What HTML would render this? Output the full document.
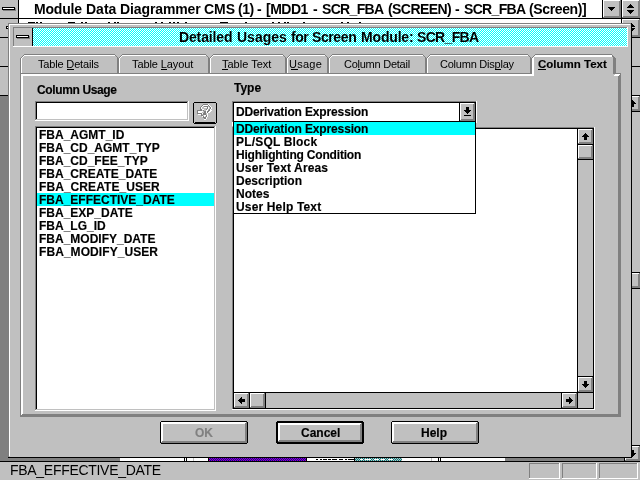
<!DOCTYPE html><html><head><meta charset="utf-8"><style>
html,body{margin:0;padding:0;width:640px;height:480px;overflow:hidden;background:#c0c0c0}
div,svg,span{position:absolute;display:block}
.t{font-family:"Liberation Sans",sans-serif;white-space:pre;line-height:0;will-change:transform}
</style></head><body>
<div style="left:19px;top:0px;width:583px;height:18px;background:#ffffff;"></div>
<div style="left:0px;top:18px;width:640px;height:1px;background:#000000;"></div>
<div style="left:18px;top:0px;width:1px;height:23px;background:#000000;"></div>
<div style="left:602px;top:0px;width:1px;height:18px;background:#000000;"></div>
<div style="left:621px;top:0px;width:1px;height:23px;background:#000000;"></div>
<div style="left:603px;top:0px;width:18px;height:18px;background:#c0c0c0;"></div>
<div style="left:603px;top:17px;width:18px;height:1px;background:#808080;"></div>
<div style="left:620px;top:0px;width:1px;height:18px;background:#808080;"></div>
<div style="left:604px;top:16px;width:16px;height:1px;background:#808080;"></div>
<div style="left:619px;top:1px;width:1px;height:16px;background:#808080;"></div>
<div style="left:603px;top:0px;width:17px;height:1px;background:#ffffff;"></div>
<div style="left:603px;top:0px;width:1px;height:17px;background:#ffffff;"></div>
<div style="left:622px;top:0px;width:18px;height:18px;background:#c0c0c0;"></div>
<div style="left:622px;top:17px;width:18px;height:1px;background:#808080;"></div>
<div style="left:639px;top:0px;width:1px;height:18px;background:#808080;"></div>
<div style="left:623px;top:16px;width:16px;height:1px;background:#808080;"></div>
<div style="left:638px;top:1px;width:1px;height:16px;background:#808080;"></div>
<div style="left:622px;top:0px;width:17px;height:1px;background:#ffffff;"></div>
<div style="left:622px;top:0px;width:1px;height:17px;background:#ffffff;"></div>
<div style="left:2px;top:7px;width:13px;height:3px;background:#000000;"></div>
<div style="left:3px;top:8px;width:11px;height:1px;background:#ffffff;"></div>
<div style="left:15px;top:8px;width:1px;height:3px;background:#808080;"></div>
<div style="left:3px;top:10px;width:13px;height:1px;background:#808080;"></div>
<div style="left:608px;top:7px;width:7px;height:1px;background:#000000;"></div>
<div style="left:609px;top:8px;width:5px;height:1px;background:#000000;"></div>
<div style="left:610px;top:9px;width:3px;height:1px;background:#000000;"></div>
<div style="left:611px;top:10px;width:1px;height:1px;background:#000000;"></div>
<div style="left:630px;top:4px;width:1px;height:1px;background:#000000;"></div>
<div style="left:629px;top:5px;width:3px;height:1px;background:#000000;"></div>
<div style="left:628px;top:6px;width:5px;height:1px;background:#000000;"></div>
<div style="left:627px;top:7px;width:7px;height:1px;background:#000000;"></div>
<div style="left:627px;top:10px;width:7px;height:1px;background:#000000;"></div>
<div style="left:628px;top:11px;width:5px;height:1px;background:#000000;"></div>
<div style="left:629px;top:12px;width:3px;height:1px;background:#000000;"></div>
<div style="left:630px;top:13px;width:1px;height:1px;background:#000000;"></div>
<span class="t" style="left:34px;top:9px;font-size:14px;font-weight:bold;color:#000000;letter-spacing:-0.2px;">Module</span>
<span class="t" style="left:86px;top:9px;font-size:14px;font-weight:bold;color:#000000;letter-spacing:0.0px;">Data</span>
<span class="t" style="left:120px;top:9px;font-size:14px;font-weight:bold;color:#000000;letter-spacing:-0.111px;">Diagrammer</span>
<span class="t" style="left:204px;top:9px;font-size:14px;font-weight:bold;color:#000000;letter-spacing:0.0px;">CMS</span>
<span class="t" style="left:238px;top:9px;font-size:14px;font-weight:bold;color:#000000;letter-spacing:-0.5px;">(1)</span>
<span class="t" style="left:257px;top:9px;font-size:14px;font-weight:bold;color:#000000;letter-spacing:0.8px;">-</span>
<span class="t" style="left:266px;top:9px;font-size:14px;font-weight:bold;color:#000000;letter-spacing:-0.5px;">[MDD1</span>
<span class="t" style="left:313px;top:9px;font-size:14px;font-weight:bold;color:#000000;letter-spacing:0.8px;">-</span>
<span class="t" style="left:322px;top:9px;font-size:14px;font-weight:bold;color:#000000;letter-spacing:-0.667px;">SCR_FBA</span>
<span class="t" style="left:388px;top:9px;font-size:14px;font-weight:bold;color:#000000;letter-spacing:-0.571px;">(SCREEN)</span>
<span class="t" style="left:455px;top:9px;font-size:14px;font-weight:bold;color:#000000;letter-spacing:0.8px;">-</span>
<span class="t" style="left:464px;top:9px;font-size:14px;font-weight:bold;color:#000000;letter-spacing:-0.667px;">SCR_FBA</span>
<span class="t" style="left:529px;top:9px;font-size:14px;font-weight:bold;color:#000000;letter-spacing:-0.375px;">(Screen)]</span>
<div style="left:19px;top:19px;width:602px;height:4px;background:#ffffff;"></div>
<div style="left:18px;top:19px;width:1px;height:4px;background:#000000;"></div>
<div style="left:622px;top:19px;width:18px;height:18px;background:#c0c0c0;"></div>
<div style="left:622px;top:36px;width:18px;height:1px;background:#808080;"></div>
<div style="left:639px;top:19px;width:1px;height:18px;background:#808080;"></div>
<div style="left:623px;top:35px;width:16px;height:1px;background:#808080;"></div>
<div style="left:638px;top:20px;width:1px;height:16px;background:#808080;"></div>
<div style="left:622px;top:19px;width:17px;height:1px;background:#ffffff;"></div>
<div style="left:622px;top:19px;width:1px;height:17px;background:#ffffff;"></div>
<div style="left:28px;top:22px;width:7px;height:1px;background:#000000;"></div>
<div style="left:36px;top:22px;width:2px;height:1px;background:#000000;"></div>
<div style="left:40px;top:22px;width:2px;height:1px;background:#000000;"></div>
<div style="left:68px;top:22px;width:7px;height:1px;background:#000000;"></div>
<div style="left:81px;top:22px;width:2px;height:1px;background:#000000;"></div>
<div style="left:85px;top:22px;width:2px;height:1px;background:#000000;"></div>
<div style="left:108px;top:22px;width:2px;height:1px;background:#000000;"></div>
<div style="left:114px;top:22px;width:2px;height:1px;background:#000000;"></div>
<div style="left:117px;top:22px;width:2px;height:1px;background:#000000;"></div>
<div style="left:155px;top:22px;width:2px;height:1px;background:#000000;"></div>
<div style="left:161px;top:22px;width:2px;height:1px;background:#000000;"></div>
<div style="left:169px;top:22px;width:2px;height:1px;background:#000000;"></div>
<div style="left:173px;top:22px;width:2px;height:1px;background:#000000;"></div>
<div style="left:177px;top:22px;width:2px;height:1px;background:#000000;"></div>
<div style="left:185px;top:22px;width:2px;height:1px;background:#000000;"></div>
<div style="left:220px;top:22px;width:8px;height:1px;background:#000000;"></div>
<div style="left:245px;top:22px;width:2px;height:1px;background:#000000;"></div>
<div style="left:272px;top:22px;width:2px;height:1px;background:#000000;"></div>
<div style="left:278px;top:22px;width:2px;height:1px;background:#000000;"></div>
<div style="left:284px;top:22px;width:2px;height:1px;background:#000000;"></div>
<div style="left:287px;top:22px;width:2px;height:1px;background:#000000;"></div>
<div style="left:303px;top:22px;width:2px;height:1px;background:#000000;"></div>
<div style="left:341px;top:22px;width:2px;height:1px;background:#000000;"></div>
<div style="left:347px;top:22px;width:2px;height:1px;background:#000000;"></div>
<div style="left:359px;top:22px;width:2px;height:1px;background:#000000;"></div>
<div style="left:6px;top:26px;width:2px;height:3px;background:#000000;"></div>
<div style="left:7px;top:27px;width:1px;height:1px;background:#ffffff;"></div>
<div style="left:0px;top:37px;width:8px;height:1px;background:#000000;"></div>
<div style="left:632px;top:37px;width:8px;height:1px;background:#000000;"></div>
<div style="left:0px;top:66px;width:8px;height:1px;background:#000000;"></div>
<div style="left:0px;top:95px;width:8px;height:1px;background:#000000;"></div>
<div style="left:0px;top:96px;width:8px;height:365px;background:#808080;"></div>
<div style="left:632px;top:66px;width:8px;height:1px;background:#000000;"></div>
<div style="left:632px;top:95px;width:8px;height:1px;background:#000000;"></div>
<div style="left:625px;top:96px;width:15px;height:15px;background:#c0c0c0;"></div>
<div style="left:625px;top:110px;width:15px;height:1px;background:#808080;"></div>
<div style="left:639px;top:96px;width:1px;height:15px;background:#808080;"></div>
<div style="left:626px;top:109px;width:13px;height:1px;background:#808080;"></div>
<div style="left:638px;top:97px;width:1px;height:13px;background:#808080;"></div>
<div style="left:625px;top:96px;width:14px;height:1px;background:#ffffff;"></div>
<div style="left:625px;top:96px;width:1px;height:14px;background:#ffffff;"></div>
<div style="left:632px;top:111px;width:8px;height:1px;background:#000000;"></div>
<div style="left:632px;top:272px;width:8px;height:1px;background:#000000;"></div>
<div style="left:625px;top:273px;width:15px;height:15px;background:#c0c0c0;"></div>
<div style="left:625px;top:287px;width:15px;height:1px;background:#808080;"></div>
<div style="left:639px;top:273px;width:1px;height:15px;background:#808080;"></div>
<div style="left:626px;top:286px;width:13px;height:1px;background:#808080;"></div>
<div style="left:638px;top:274px;width:1px;height:13px;background:#808080;"></div>
<div style="left:625px;top:273px;width:14px;height:1px;background:#ffffff;"></div>
<div style="left:625px;top:273px;width:1px;height:14px;background:#ffffff;"></div>
<div style="left:632px;top:288px;width:8px;height:1px;background:#000000;"></div>
<div style="left:632px;top:445px;width:8px;height:1px;background:#000000;"></div>
<div style="left:625px;top:446px;width:15px;height:15px;background:#c0c0c0;"></div>
<div style="left:625px;top:460px;width:15px;height:1px;background:#808080;"></div>
<div style="left:639px;top:446px;width:1px;height:15px;background:#808080;"></div>
<div style="left:626px;top:459px;width:13px;height:1px;background:#808080;"></div>
<div style="left:638px;top:447px;width:1px;height:13px;background:#808080;"></div>
<div style="left:625px;top:446px;width:14px;height:1px;background:#ffffff;"></div>
<div style="left:625px;top:446px;width:1px;height:14px;background:#ffffff;"></div>
<div style="left:624px;top:458px;width:1px;height:3px;background:#000000;"></div>
<div style="left:632px;top:24px;width:1px;height:1px;background:#000000;"></div>
<div style="left:632px;top:25px;width:2px;height:1px;background:#000000;"></div>
<div style="left:632px;top:26px;width:3px;height:1px;background:#000000;"></div>
<div style="left:632px;top:28px;width:3px;height:1px;background:#000000;"></div>
<div style="left:632px;top:29px;width:2px;height:1px;background:#000000;"></div>
<div style="left:632px;top:30px;width:1px;height:1px;background:#000000;"></div>
<div style="left:632px;top:100px;width:1px;height:1px;background:#000000;"></div>
<div style="left:632px;top:101px;width:2px;height:1px;background:#000000;"></div>
<div style="left:632px;top:102px;width:3px;height:1px;background:#000000;"></div>
<div style="left:632px;top:103px;width:4px;height:1px;background:#000000;"></div>
<div style="left:632px;top:104px;width:2px;height:3px;background:#000000;"></div>
<div style="left:632px;top:450px;width:2px;height:3px;background:#000000;"></div>
<div style="left:632px;top:453px;width:4px;height:1px;background:#000000;"></div>
<div style="left:632px;top:454px;width:3px;height:1px;background:#000000;"></div>
<div style="left:632px;top:455px;width:2px;height:1px;background:#000000;"></div>
<div style="left:632px;top:456px;width:1px;height:1px;background:#000000;"></div>
<div style="left:8px;top:458px;width:112px;height:3px;background:#808080;"></div>
<div style="left:120px;top:458px;width:88px;height:3px;background:#ffffff;"></div>
<div style="left:184px;top:458px;width:1px;height:3px;background:#000000;"></div>
<div style="left:186px;top:458px;width:1px;height:3px;background:#000000;"></div>
<div style="left:193px;top:458px;width:1px;height:3px;background:#c0c0c0;"></div>
<div style="left:208px;top:458px;width:1px;height:3px;background:#000000;"></div>
<svg style="left:209px;top:458px" width="97" height="3" shape-rendering="crispEdges"><defs><pattern id="p209_458" width="2" height="2" patternUnits="userSpaceOnUse"><rect width="2" height="2" fill="#0000b0"/><rect width="1" height="1" fill="#b000a0"/><rect x="1" y="1" width="1" height="1" fill="#b000a0"/></pattern></defs><rect width="97" height="3" fill="url(#p209_458)"/></svg>
<div style="left:306px;top:458px;width:1px;height:3px;background:#000000;"></div>
<div style="left:307px;top:458px;width:48px;height:3px;background:#ffffff;"></div>
<div style="left:316px;top:459px;width:2px;height:1px;background:#000000;"></div>
<div style="left:320px;top:459px;width:2px;height:1px;background:#000000;"></div>
<div style="left:323px;top:459px;width:4px;height:1px;background:#000000;"></div>
<div style="left:328px;top:459px;width:3px;height:1px;background:#000000;"></div>
<div style="left:332px;top:459px;width:5px;height:1px;background:#000000;"></div>
<div style="left:339px;top:459px;width:4px;height:1px;background:#000000;"></div>
<div style="left:345px;top:459px;width:2px;height:1px;background:#000000;"></div>
<div style="left:348px;top:459px;width:7px;height:1px;background:#000000;"></div>
<svg style="left:355px;top:458px" width="47" height="3" shape-rendering="crispEdges"><defs><pattern id="p355_458" width="2" height="2" patternUnits="userSpaceOnUse"><rect width="2" height="2" fill="#008080"/><rect width="1" height="1" fill="#c0c0c0"/><rect x="1" y="1" width="1" height="1" fill="#c0c0c0"/></pattern></defs><rect width="47" height="3" fill="url(#p355_458)"/></svg>
<div style="left:354px;top:458px;width:1px;height:3px;background:#000000;"></div>
<div style="left:402px;top:458px;width:1px;height:3px;background:#000000;"></div>
<div style="left:360px;top:459px;width:3px;height:1px;background:#ffffff;"></div>
<div style="left:365px;top:459px;width:6px;height:1px;background:#ffffff;"></div>
<div style="left:374px;top:459px;width:5px;height:1px;background:#ffffff;"></div>
<div style="left:381px;top:459px;width:4px;height:1px;background:#ffffff;"></div>
<div style="left:388px;top:459px;width:5px;height:1px;background:#ffffff;"></div>
<div style="left:402px;top:458px;width:103px;height:3px;background:#ffffff;"></div>
<div style="left:431px;top:458px;width:1px;height:3px;background:#c0c0c0;"></div>
<div style="left:438px;top:458px;width:1px;height:3px;background:#000000;"></div>
<div style="left:440px;top:458px;width:1px;height:3px;background:#000000;"></div>
<div style="left:505px;top:458px;width:119px;height:3px;background:#808080;"></div>
<div style="left:0px;top:461px;width:640px;height:1px;background:#000000;"></div>
<span class="t" style="left:10px;top:470px;font-size:14px;font-weight:normal;color:#000000;letter-spacing:-0.294px;">FBA_EFFECTIVE_DATE</span>
<div style="left:529px;top:463px;width:31px;height:1px;background:#808080;"></div>
<div style="left:529px;top:463px;width:1px;height:16px;background:#808080;"></div>
<div style="left:529px;top:478px;width:31px;height:1px;background:#ffffff;"></div>
<div style="left:559px;top:463px;width:1px;height:16px;background:#ffffff;"></div>
<div style="left:562px;top:463px;width:35px;height:1px;background:#808080;"></div>
<div style="left:562px;top:463px;width:1px;height:16px;background:#808080;"></div>
<div style="left:562px;top:478px;width:35px;height:1px;background:#ffffff;"></div>
<div style="left:596px;top:463px;width:1px;height:16px;background:#ffffff;"></div>
<div style="left:599px;top:463px;width:39px;height:1px;background:#808080;"></div>
<div style="left:599px;top:463px;width:1px;height:16px;background:#808080;"></div>
<div style="left:599px;top:478px;width:39px;height:1px;background:#ffffff;"></div>
<div style="left:637px;top:463px;width:1px;height:16px;background:#ffffff;"></div>
<div style="left:8px;top:23px;width:624px;height:435px;background:#c0c0c0;"></div>
<div style="left:8px;top:23px;width:623px;height:1px;background:#808080;"></div>
<div style="left:8px;top:23px;width:1px;height:434px;background:#808080;"></div>
<div style="left:9px;top:24px;width:621px;height:1px;background:#ffffff;"></div>
<div style="left:9px;top:24px;width:1px;height:432px;background:#ffffff;"></div>
<div style="left:8px;top:457px;width:624px;height:1px;background:#000000;"></div>
<div style="left:631px;top:23px;width:1px;height:435px;background:#000000;"></div>
<div style="left:13px;top:27px;width:614px;height:1px;background:#808080;"></div>
<div style="left:13px;top:27px;width:1px;height:20px;background:#808080;"></div>
<div style="left:13px;top:46px;width:615px;height:1px;background:#ffffff;"></div>
<div style="left:627px;top:27px;width:1px;height:20px;background:#ffffff;"></div>
<div style="left:14px;top:28px;width:18px;height:18px;background:#c0c0c0;"></div>
<div style="left:32px;top:28px;width:1px;height:18px;background:#000000;"></div>
<div style="left:16px;top:35px;width:13px;height:3px;background:#000000;"></div>
<div style="left:17px;top:36px;width:11px;height:1px;background:#ffffff;"></div>
<div style="left:29px;top:36px;width:1px;height:3px;background:#808080;"></div>
<div style="left:17px;top:38px;width:13px;height:1px;background:#808080;"></div>
<svg style="left:33px;top:28px" width="594" height="18" shape-rendering="crispEdges"><defs><pattern id="p33_28" width="2" height="2" patternUnits="userSpaceOnUse"><rect width="2" height="2" fill="#ffffff"/><rect width="1" height="1" fill="#00ffff"/><rect x="1" y="1" width="1" height="1" fill="#00ffff"/></pattern></defs><rect width="594" height="18" fill="url(#p33_28)"/></svg>
<span class="t" style="left:179px;top:37px;font-size:14px;font-weight:bold;color:#000000;letter-spacing:-0.143px;">Detailed</span>
<span class="t" style="left:237px;top:37px;font-size:14px;font-weight:bold;color:#000000;letter-spacing:0.0px;">Usages</span>
<span class="t" style="left:291px;top:37px;font-size:14px;font-weight:bold;color:#000000;letter-spacing:-0.5px;">for</span>
<span class="t" style="left:312px;top:37px;font-size:14px;font-weight:bold;color:#000000;letter-spacing:-0.4px;">Screen</span>
<span class="t" style="left:361px;top:37px;font-size:14px;font-weight:bold;color:#000000;letter-spacing:-0.167px;">Module:</span>
<span class="t" style="left:417px;top:37px;font-size:14px;font-weight:bold;color:#000000;letter-spacing:-0.667px;">SCR_FBA</span>
<div style="left:20px;top:73px;width:601px;height:344px;background:#c0c0c0;"></div>
<div style="left:20px;top:73px;width:601px;height:1px;background:#808080;"></div>
<div style="left:20px;top:73px;width:1px;height:344px;background:#808080;"></div>
<div style="left:21px;top:74px;width:599px;height:1px;background:#ffffff;"></div>
<div style="left:21px;top:75px;width:599px;height:1px;background:#ffffff;"></div>
<div style="left:21px;top:74px;width:1px;height:342px;background:#ffffff;"></div>
<div style="left:22px;top:74px;width:1px;height:341px;background:#ffffff;"></div>
<div style="left:620px;top:73px;width:1px;height:344px;background:#808080;"></div>
<div style="left:619px;top:74px;width:1px;height:343px;background:#808080;"></div>
<div style="left:618px;top:75px;width:1px;height:342px;background:#808080;"></div>
<div style="left:20px;top:416px;width:601px;height:1px;background:#808080;"></div>
<div style="left:21px;top:415px;width:600px;height:1px;background:#808080;"></div>
<div style="left:22px;top:414px;width:599px;height:1px;background:#808080;"></div>
<div style="left:21px;top:54px;width:97px;height:19px;background:#c0c0c0;"></div>
<div style="left:24px;top:54px;width:91px;height:1px;background:#808080;"></div>
<div style="left:24px;top:55px;width:91px;height:1px;background:#ffffff;"></div>
<div style="left:20px;top:58px;width:1px;height:15px;background:#808080;"></div>
<div style="left:21px;top:58px;width:1px;height:15px;background:#ffffff;"></div>
<div style="left:21px;top:57px;width:1px;height:1px;background:#808080;"></div>
<div style="left:22px;top:56px;width:1px;height:1px;background:#808080;"></div>
<div style="left:23px;top:55px;width:1px;height:1px;background:#808080;"></div>
<div style="left:22px;top:57px;width:1px;height:1px;background:#ffffff;"></div>
<div style="left:23px;top:56px;width:1px;height:1px;background:#ffffff;"></div>
<div style="left:115px;top:55px;width:1px;height:1px;background:#808080;"></div>
<div style="left:116px;top:56px;width:1px;height:1px;background:#808080;"></div>
<div style="left:117px;top:57px;width:1px;height:16px;background:#808080;"></div>
<div style="left:118px;top:58px;width:1px;height:15px;background:#808080;"></div>
<div style="left:119px;top:54px;width:90px;height:19px;background:#c0c0c0;"></div>
<div style="left:122px;top:54px;width:84px;height:1px;background:#808080;"></div>
<div style="left:122px;top:55px;width:84px;height:1px;background:#ffffff;"></div>
<div style="left:118px;top:58px;width:1px;height:15px;background:#808080;"></div>
<div style="left:119px;top:58px;width:1px;height:15px;background:#ffffff;"></div>
<div style="left:119px;top:57px;width:1px;height:1px;background:#808080;"></div>
<div style="left:120px;top:56px;width:1px;height:1px;background:#808080;"></div>
<div style="left:121px;top:55px;width:1px;height:1px;background:#808080;"></div>
<div style="left:120px;top:57px;width:1px;height:1px;background:#ffffff;"></div>
<div style="left:121px;top:56px;width:1px;height:1px;background:#ffffff;"></div>
<div style="left:206px;top:55px;width:1px;height:1px;background:#808080;"></div>
<div style="left:207px;top:56px;width:1px;height:1px;background:#808080;"></div>
<div style="left:208px;top:57px;width:1px;height:16px;background:#808080;"></div>
<div style="left:209px;top:58px;width:1px;height:15px;background:#808080;"></div>
<div style="left:210px;top:54px;width:76px;height:19px;background:#c0c0c0;"></div>
<div style="left:213px;top:54px;width:70px;height:1px;background:#808080;"></div>
<div style="left:213px;top:55px;width:70px;height:1px;background:#ffffff;"></div>
<div style="left:209px;top:58px;width:1px;height:15px;background:#808080;"></div>
<div style="left:210px;top:58px;width:1px;height:15px;background:#ffffff;"></div>
<div style="left:210px;top:57px;width:1px;height:1px;background:#808080;"></div>
<div style="left:211px;top:56px;width:1px;height:1px;background:#808080;"></div>
<div style="left:212px;top:55px;width:1px;height:1px;background:#808080;"></div>
<div style="left:211px;top:57px;width:1px;height:1px;background:#ffffff;"></div>
<div style="left:212px;top:56px;width:1px;height:1px;background:#ffffff;"></div>
<div style="left:283px;top:55px;width:1px;height:1px;background:#808080;"></div>
<div style="left:284px;top:56px;width:1px;height:1px;background:#808080;"></div>
<div style="left:285px;top:57px;width:1px;height:16px;background:#808080;"></div>
<div style="left:286px;top:58px;width:1px;height:15px;background:#808080;"></div>
<div style="left:287px;top:54px;width:41px;height:19px;background:#c0c0c0;"></div>
<div style="left:290px;top:54px;width:35px;height:1px;background:#808080;"></div>
<div style="left:290px;top:55px;width:35px;height:1px;background:#ffffff;"></div>
<div style="left:286px;top:58px;width:1px;height:15px;background:#808080;"></div>
<div style="left:287px;top:58px;width:1px;height:15px;background:#ffffff;"></div>
<div style="left:287px;top:57px;width:1px;height:1px;background:#808080;"></div>
<div style="left:288px;top:56px;width:1px;height:1px;background:#808080;"></div>
<div style="left:289px;top:55px;width:1px;height:1px;background:#808080;"></div>
<div style="left:288px;top:57px;width:1px;height:1px;background:#ffffff;"></div>
<div style="left:289px;top:56px;width:1px;height:1px;background:#ffffff;"></div>
<div style="left:325px;top:55px;width:1px;height:1px;background:#808080;"></div>
<div style="left:326px;top:56px;width:1px;height:1px;background:#808080;"></div>
<div style="left:327px;top:57px;width:1px;height:16px;background:#808080;"></div>
<div style="left:328px;top:58px;width:1px;height:15px;background:#808080;"></div>
<div style="left:329px;top:54px;width:97px;height:19px;background:#c0c0c0;"></div>
<div style="left:332px;top:54px;width:91px;height:1px;background:#808080;"></div>
<div style="left:332px;top:55px;width:91px;height:1px;background:#ffffff;"></div>
<div style="left:328px;top:58px;width:1px;height:15px;background:#808080;"></div>
<div style="left:329px;top:58px;width:1px;height:15px;background:#ffffff;"></div>
<div style="left:329px;top:57px;width:1px;height:1px;background:#808080;"></div>
<div style="left:330px;top:56px;width:1px;height:1px;background:#808080;"></div>
<div style="left:331px;top:55px;width:1px;height:1px;background:#808080;"></div>
<div style="left:330px;top:57px;width:1px;height:1px;background:#ffffff;"></div>
<div style="left:331px;top:56px;width:1px;height:1px;background:#ffffff;"></div>
<div style="left:423px;top:55px;width:1px;height:1px;background:#808080;"></div>
<div style="left:424px;top:56px;width:1px;height:1px;background:#808080;"></div>
<div style="left:425px;top:57px;width:1px;height:16px;background:#808080;"></div>
<div style="left:426px;top:58px;width:1px;height:15px;background:#808080;"></div>
<div style="left:427px;top:54px;width:104px;height:19px;background:#c0c0c0;"></div>
<div style="left:430px;top:54px;width:98px;height:1px;background:#808080;"></div>
<div style="left:430px;top:55px;width:98px;height:1px;background:#ffffff;"></div>
<div style="left:426px;top:58px;width:1px;height:15px;background:#808080;"></div>
<div style="left:427px;top:58px;width:1px;height:15px;background:#ffffff;"></div>
<div style="left:427px;top:57px;width:1px;height:1px;background:#808080;"></div>
<div style="left:428px;top:56px;width:1px;height:1px;background:#808080;"></div>
<div style="left:429px;top:55px;width:1px;height:1px;background:#808080;"></div>
<div style="left:428px;top:57px;width:1px;height:1px;background:#ffffff;"></div>
<div style="left:429px;top:56px;width:1px;height:1px;background:#ffffff;"></div>
<div style="left:528px;top:55px;width:1px;height:1px;background:#808080;"></div>
<div style="left:529px;top:56px;width:1px;height:1px;background:#808080;"></div>
<div style="left:530px;top:57px;width:1px;height:16px;background:#808080;"></div>
<div style="left:531px;top:58px;width:1px;height:15px;background:#808080;"></div>
<div style="left:532px;top:54px;width:84px;height:22px;background:#c0c0c0;"></div>
<div style="left:535px;top:54px;width:77px;height:1px;background:#808080;"></div>
<div style="left:535px;top:55px;width:77px;height:1px;background:#ffffff;"></div>
<div style="left:534px;top:56px;width:78px;height:1px;background:#ffffff;"></div>
<div style="left:531px;top:58px;width:1px;height:16px;background:#808080;"></div>
<div style="left:532px;top:58px;width:1px;height:18px;background:#ffffff;"></div>
<div style="left:533px;top:57px;width:1px;height:19px;background:#ffffff;"></div>
<div style="left:532px;top:57px;width:1px;height:1px;background:#808080;"></div>
<div style="left:533px;top:56px;width:1px;height:1px;background:#808080;"></div>
<div style="left:534px;top:55px;width:1px;height:1px;background:#808080;"></div>
<div style="left:612px;top:55px;width:1px;height:1px;background:#808080;"></div>
<div style="left:613px;top:56px;width:1px;height:1px;background:#808080;"></div>
<div style="left:612px;top:56px;width:1px;height:1px;background:#808080;"></div>
<div style="left:613px;top:57px;width:1px;height:17px;background:#808080;"></div>
<div style="left:614px;top:57px;width:1px;height:17px;background:#808080;"></div>
<div style="left:615px;top:58px;width:1px;height:16px;background:#808080;"></div>
<div style="left:616px;top:73px;width:5px;height:1px;background:#808080;"></div>
<div style="left:615px;top:74px;width:5px;height:1px;background:#ffffff;"></div>
<div style="left:614px;top:75px;width:5px;height:1px;background:#ffffff;"></div>
<span class="t" style="left:38px;top:64px;font-size:11px;font-weight:normal;color:#000000;letter-spacing:-0.167px;">Table Details</span>
<span class="t" style="left:132px;top:64px;font-size:11px;font-weight:normal;color:#000000;letter-spacing:-0.091px;">Table Layout</span>
<span class="t" style="left:222px;top:64px;font-size:11px;font-weight:normal;color:#000000;letter-spacing:0.0px;">Table Text</span>
<span class="t" style="left:289px;top:64px;font-size:11px;font-weight:normal;color:#000000;letter-spacing:0.25px;">Usage</span>
<span class="t" style="left:344px;top:64px;font-size:11px;font-weight:normal;color:#000000;letter-spacing:-0.25px;">Column Detail</span>
<span class="t" style="left:440px;top:64px;font-size:11px;font-weight:normal;color:#000000;letter-spacing:-0.231px;">Column Display</span>
<span class="t" style="left:538px;top:64px;font-size:11.5px;font-weight:bold;color:#000000;letter-spacing:0.0px;-webkit-text-stroke:0.15px #000000;">Column Text</span>
<div style="left:67px;top:69px;width:7px;height:1px;background:#000000;"></div>
<div style="left:161px;top:69px;width:6px;height:1px;background:#000000;"></div>
<div style="left:222px;top:69px;width:6px;height:1px;background:#000000;"></div>
<div style="left:291px;top:69px;width:7px;height:1px;background:#000000;"></div>
<div style="left:358px;top:69px;width:2px;height:1px;background:#000000;"></div>
<div style="left:495px;top:69px;width:6px;height:1px;background:#000000;"></div>
<div style="left:538px;top:69px;width:8px;height:1px;background:#000000;"></div>
<span class="t" style="left:37px;top:90px;font-size:12px;font-weight:bold;color:#000000;letter-spacing:-0.364px;-webkit-text-stroke:0.15px #000000;">Column Usage</span>
<div style="left:35px;top:101px;width:154px;height:20px;background:#ffffff;"></div>
<div style="left:35px;top:101px;width:154px;height:1px;background:#808080;"></div>
<div style="left:35px;top:101px;width:1px;height:20px;background:#808080;"></div>
<div style="left:36px;top:102px;width:152px;height:1px;background:#000000;"></div>
<div style="left:36px;top:102px;width:1px;height:18px;background:#000000;"></div>
<div style="left:35px;top:120px;width:154px;height:1px;background:#ffffff;"></div>
<div style="left:188px;top:101px;width:1px;height:20px;background:#ffffff;"></div>
<div style="left:36px;top:119px;width:152px;height:1px;background:#c0c0c0;"></div>
<div style="left:187px;top:102px;width:1px;height:18px;background:#c0c0c0;"></div>
<div style="left:194px;top:102px;width:22px;height:21px;background:#c0c0c0;"></div>
<div style="left:194px;top:102px;width:22px;height:1px;background:#000000;"></div>
<div style="left:194px;top:123px;width:22px;height:1px;background:#000000;"></div>
<div style="left:193px;top:103px;width:1px;height:20px;background:#000000;"></div>
<div style="left:216px;top:103px;width:1px;height:20px;background:#000000;"></div>
<div style="left:195px;top:122px;width:20px;height:1px;background:#000000;"></div>
<div style="left:208px;top:104px;width:1px;height:1px;background:#ffffff;"></div>
<div style="left:203px;top:105px;width:5px;height:1px;background:#ffffff;"></div>
<div style="left:209px;top:105px;width:1px;height:1px;background:#ffffff;"></div>
<div style="left:202px;top:106px;width:1px;height:1px;background:#ffffff;"></div>
<div style="left:210px;top:106px;width:1px;height:1px;background:#ffffff;"></div>
<div style="left:201px;top:107px;width:1px;height:1px;background:#ffffff;"></div>
<div style="left:204px;top:107px;width:3px;height:1px;background:#ffffff;"></div>
<div style="left:208px;top:107px;width:1px;height:1px;background:#ffffff;"></div>
<div style="left:211px;top:107px;width:1px;height:1px;background:#ffffff;"></div>
<div style="left:201px;top:108px;width:1px;height:1px;background:#ffffff;"></div>
<div style="left:208px;top:108px;width:1px;height:1px;background:#ffffff;"></div>
<div style="left:211px;top:108px;width:1px;height:1px;background:#ffffff;"></div>
<div style="left:202px;top:109px;width:2px;height:1px;background:#ffffff;"></div>
<div style="left:207px;top:109px;width:1px;height:1px;background:#ffffff;"></div>
<div style="left:210px;top:109px;width:1px;height:1px;background:#ffffff;"></div>
<div style="left:206px;top:110px;width:2px;height:1px;background:#ffffff;"></div>
<div style="left:210px;top:110px;width:2px;height:1px;background:#ffffff;"></div>
<div style="left:198px;top:111px;width:5px;height:1px;background:#ffffff;"></div>
<div style="left:206px;top:111px;width:1px;height:1px;background:#ffffff;"></div>
<div style="left:209px;top:111px;width:2px;height:1px;background:#ffffff;"></div>
<div style="left:198px;top:112px;width:4px;height:1px;background:#ffffff;"></div>
<div style="left:206px;top:112px;width:1px;height:1px;background:#ffffff;"></div>
<div style="left:208px;top:112px;width:2px;height:1px;background:#ffffff;"></div>
<div style="left:202px;top:113px;width:1px;height:1px;background:#ffffff;"></div>
<div style="left:207px;top:113px;width:1px;height:1px;background:#ffffff;"></div>
<div style="left:198px;top:114px;width:3px;height:1px;background:#ffffff;"></div>
<div style="left:207px;top:114px;width:1px;height:1px;background:#ffffff;"></div>
<div style="left:204px;top:115px;width:2px;height:1px;background:#ffffff;"></div>
<div style="left:207px;top:115px;width:1px;height:1px;background:#ffffff;"></div>
<div style="left:202px;top:116px;width:1px;height:1px;background:#ffffff;"></div>
<div style="left:204px;top:116px;width:1px;height:1px;background:#ffffff;"></div>
<div style="left:207px;top:116px;width:1px;height:1px;background:#ffffff;"></div>
<div style="left:206px;top:117px;width:1px;height:1px;background:#ffffff;"></div>
<div style="left:206px;top:118px;width:1px;height:1px;background:#ffffff;"></div>
<div style="left:204px;top:119px;width:2px;height:1px;background:#ffffff;"></div>
<div style="left:203px;top:104px;width:5px;height:1px;background:#808080;"></div>
<div style="left:202px;top:105px;width:1px;height:1px;background:#808080;"></div>
<div style="left:208px;top:105px;width:1px;height:1px;background:#808080;"></div>
<div style="left:201px;top:106px;width:1px;height:1px;background:#808080;"></div>
<div style="left:204px;top:106px;width:4px;height:1px;background:#808080;"></div>
<div style="left:209px;top:106px;width:1px;height:1px;background:#808080;"></div>
<div style="left:200px;top:107px;width:1px;height:1px;background:#808080;"></div>
<div style="left:207px;top:107px;width:1px;height:1px;background:#808080;"></div>
<div style="left:210px;top:107px;width:1px;height:1px;background:#808080;"></div>
<div style="left:200px;top:108px;width:1px;height:1px;background:#808080;"></div>
<div style="left:207px;top:108px;width:1px;height:1px;background:#808080;"></div>
<div style="left:210px;top:108px;width:1px;height:1px;background:#808080;"></div>
<div style="left:200px;top:109px;width:2px;height:1px;background:#808080;"></div>
<div style="left:206px;top:109px;width:1px;height:1px;background:#808080;"></div>
<div style="left:209px;top:109px;width:1px;height:1px;background:#808080;"></div>
<div style="left:197px;top:110px;width:5px;height:1px;background:#808080;"></div>
<div style="left:203px;top:110px;width:1px;height:1px;background:#808080;"></div>
<div style="left:208px;top:110px;width:2px;height:1px;background:#808080;"></div>
<div style="left:197px;top:111px;width:1px;height:1px;background:#808080;"></div>
<div style="left:204px;top:111px;width:2px;height:1px;background:#808080;"></div>
<div style="left:207px;top:111px;width:2px;height:1px;background:#808080;"></div>
<div style="left:197px;top:112px;width:1px;height:1px;background:#808080;"></div>
<div style="left:204px;top:112px;width:2px;height:1px;background:#808080;"></div>
<div style="left:207px;top:112px;width:1px;height:1px;background:#808080;"></div>
<div style="left:197px;top:113px;width:5px;height:1px;background:#808080;"></div>
<div style="left:203px;top:113px;width:3px;height:1px;background:#808080;"></div>
<div style="left:201px;top:114px;width:1px;height:1px;background:#808080;"></div>
<div style="left:203px;top:114px;width:3px;height:1px;background:#808080;"></div>
<div style="left:201px;top:115px;width:2px;height:1px;background:#808080;"></div>
<div style="left:206px;top:115px;width:1px;height:1px;background:#808080;"></div>
<div style="left:203px;top:116px;width:1px;height:1px;background:#808080;"></div>
<div style="left:206px;top:116px;width:1px;height:1px;background:#808080;"></div>
<div style="left:203px;top:117px;width:3px;height:1px;background:#808080;"></div>
<div style="left:204px;top:118px;width:2px;height:1px;background:#808080;"></div>
<div style="left:35px;top:126px;width:181px;height:285px;background:#ffffff;"></div>
<div style="left:35px;top:126px;width:181px;height:1px;background:#808080;"></div>
<div style="left:35px;top:126px;width:1px;height:285px;background:#808080;"></div>
<div style="left:36px;top:127px;width:179px;height:1px;background:#000000;"></div>
<div style="left:36px;top:127px;width:1px;height:283px;background:#000000;"></div>
<div style="left:35px;top:410px;width:181px;height:1px;background:#ffffff;"></div>
<div style="left:215px;top:126px;width:1px;height:285px;background:#ffffff;"></div>
<div style="left:36px;top:409px;width:179px;height:1px;background:#c0c0c0;"></div>
<div style="left:214px;top:127px;width:1px;height:283px;background:#c0c0c0;"></div>
<div style="left:37px;top:193px;width:177px;height:13px;background:#00ffff;"></div>
<span class="t" style="left:39px;top:135px;font-size:12px;font-weight:bold;color:#000000;letter-spacing:0.0px;-webkit-text-stroke:0.15px #000000;">FBA_AGMT_ID</span>
<span class="t" style="left:39px;top:148px;font-size:12px;font-weight:bold;color:#000000;letter-spacing:0.0px;-webkit-text-stroke:0.15px #000000;">FBA_CD_AGMT_TYP</span>
<span class="t" style="left:39px;top:161px;font-size:12px;font-weight:bold;color:#000000;letter-spacing:0.0px;-webkit-text-stroke:0.15px #000000;">FBA_CD_FEE_TYP</span>
<span class="t" style="left:39px;top:174px;font-size:12px;font-weight:bold;color:#000000;letter-spacing:0.0px;-webkit-text-stroke:0.15px #000000;">FBA_CREATE_DATE</span>
<span class="t" style="left:39px;top:187px;font-size:12px;font-weight:bold;color:#000000;letter-spacing:0.071px;-webkit-text-stroke:0.15px #000000;">FBA_CREATE_USER</span>
<span class="t" style="left:39px;top:200px;font-size:12px;font-weight:bold;color:#000000;letter-spacing:0.0px;-webkit-text-stroke:0.15px #000000;">FBA_EFFECTIVE_DATE</span>
<span class="t" style="left:39px;top:213px;font-size:12px;font-weight:bold;color:#000000;letter-spacing:0.0px;-webkit-text-stroke:0.15px #000000;">FBA_EXP_DATE</span>
<span class="t" style="left:39px;top:226px;font-size:12px;font-weight:bold;color:#000000;letter-spacing:0.0px;-webkit-text-stroke:0.15px #000000;">FBA_LG_ID</span>
<span class="t" style="left:39px;top:239px;font-size:12px;font-weight:bold;color:#000000;letter-spacing:0.0px;-webkit-text-stroke:0.15px #000000;">FBA_MODIFY_DATE</span>
<span class="t" style="left:39px;top:252px;font-size:12px;font-weight:bold;color:#000000;letter-spacing:0.071px;-webkit-text-stroke:0.15px #000000;">FBA_MODIFY_USER</span>
<span class="t" style="left:234px;top:88px;font-size:12px;font-weight:bold;color:#000000;letter-spacing:0.0px;-webkit-text-stroke:0.15px #000000;">Type</span>
<div style="left:232px;top:127px;width:363px;height:283px;background:#ffffff;"></div>
<div style="left:232px;top:127px;width:363px;height:1px;background:#808080;"></div>
<div style="left:232px;top:127px;width:1px;height:283px;background:#808080;"></div>
<div style="left:233px;top:128px;width:361px;height:1px;background:#000000;"></div>
<div style="left:233px;top:128px;width:1px;height:281px;background:#000000;"></div>
<div style="left:232px;top:409px;width:363px;height:1px;background:#ffffff;"></div>
<div style="left:594px;top:127px;width:1px;height:283px;background:#ffffff;"></div>
<div style="left:233px;top:408px;width:361px;height:1px;background:#c0c0c0;"></div>
<div style="left:593px;top:128px;width:1px;height:281px;background:#c0c0c0;"></div>
<div style="left:577px;top:128px;width:1px;height:280px;background:#000000;"></div>
<div style="left:578px;top:129px;width:15px;height:15px;background:#c0c0c0;"></div>
<div style="left:578px;top:143px;width:15px;height:1px;background:#808080;"></div>
<div style="left:592px;top:129px;width:1px;height:15px;background:#808080;"></div>
<div style="left:579px;top:142px;width:13px;height:1px;background:#808080;"></div>
<div style="left:591px;top:130px;width:1px;height:13px;background:#808080;"></div>
<div style="left:578px;top:129px;width:14px;height:1px;background:#ffffff;"></div>
<div style="left:578px;top:129px;width:1px;height:14px;background:#ffffff;"></div>
<div style="left:578px;top:144px;width:15px;height:1px;background:#000000;"></div>
<div style="left:578px;top:145px;width:15px;height:14px;background:#c0c0c0;"></div>
<div style="left:578px;top:158px;width:15px;height:1px;background:#808080;"></div>
<div style="left:592px;top:145px;width:1px;height:14px;background:#808080;"></div>
<div style="left:579px;top:157px;width:13px;height:1px;background:#808080;"></div>
<div style="left:591px;top:146px;width:1px;height:12px;background:#808080;"></div>
<div style="left:578px;top:145px;width:14px;height:1px;background:#ffffff;"></div>
<div style="left:578px;top:145px;width:1px;height:13px;background:#ffffff;"></div>
<div style="left:578px;top:159px;width:15px;height:1px;background:#000000;"></div>
<div style="left:578px;top:377px;width:15px;height:15px;background:#c0c0c0;"></div>
<div style="left:578px;top:391px;width:15px;height:1px;background:#808080;"></div>
<div style="left:592px;top:377px;width:1px;height:15px;background:#808080;"></div>
<div style="left:579px;top:390px;width:13px;height:1px;background:#808080;"></div>
<div style="left:591px;top:378px;width:1px;height:13px;background:#808080;"></div>
<div style="left:578px;top:377px;width:14px;height:1px;background:#ffffff;"></div>
<div style="left:578px;top:377px;width:1px;height:14px;background:#ffffff;"></div>
<div style="left:578px;top:376px;width:15px;height:1px;background:#000000;"></div>
<div style="left:578px;top:160px;width:15px;height:216px;background:#c0c0c0;"></div>
<div style="left:266px;top:393px;width:295px;height:15px;background:#c0c0c0;"></div>
<div style="left:234px;top:392px;width:360px;height:1px;background:#000000;"></div>
<div style="left:234px;top:393px;width:15px;height:15px;background:#c0c0c0;"></div>
<div style="left:234px;top:407px;width:15px;height:1px;background:#808080;"></div>
<div style="left:248px;top:393px;width:1px;height:15px;background:#808080;"></div>
<div style="left:235px;top:406px;width:13px;height:1px;background:#808080;"></div>
<div style="left:247px;top:394px;width:1px;height:13px;background:#808080;"></div>
<div style="left:234px;top:393px;width:14px;height:1px;background:#ffffff;"></div>
<div style="left:234px;top:393px;width:1px;height:14px;background:#ffffff;"></div>
<div style="left:249px;top:393px;width:1px;height:15px;background:#000000;"></div>
<div style="left:250px;top:393px;width:15px;height:15px;background:#c0c0c0;"></div>
<div style="left:250px;top:407px;width:15px;height:1px;background:#808080;"></div>
<div style="left:264px;top:393px;width:1px;height:15px;background:#808080;"></div>
<div style="left:251px;top:406px;width:13px;height:1px;background:#808080;"></div>
<div style="left:263px;top:394px;width:1px;height:13px;background:#808080;"></div>
<div style="left:250px;top:393px;width:14px;height:1px;background:#ffffff;"></div>
<div style="left:250px;top:393px;width:1px;height:14px;background:#ffffff;"></div>
<div style="left:265px;top:393px;width:1px;height:15px;background:#000000;"></div>
<div style="left:562px;top:393px;width:15px;height:15px;background:#c0c0c0;"></div>
<div style="left:562px;top:407px;width:15px;height:1px;background:#808080;"></div>
<div style="left:576px;top:393px;width:1px;height:15px;background:#808080;"></div>
<div style="left:563px;top:406px;width:13px;height:1px;background:#808080;"></div>
<div style="left:575px;top:394px;width:1px;height:13px;background:#808080;"></div>
<div style="left:562px;top:393px;width:14px;height:1px;background:#ffffff;"></div>
<div style="left:562px;top:393px;width:1px;height:14px;background:#ffffff;"></div>
<div style="left:561px;top:393px;width:1px;height:15px;background:#000000;"></div>
<div style="left:578px;top:393px;width:15px;height:15px;background:#c0c0c0;"></div>
<div style="left:233px;top:408px;width:361px;height:1px;background:#000000;"></div>
<div style="left:593px;top:128px;width:1px;height:281px;background:#000000;"></div>
<div style="left:585px;top:133px;width:1px;height:1px;background:#000000;"></div>
<div style="left:584px;top:134px;width:3px;height:1px;background:#000000;"></div>
<div style="left:583px;top:135px;width:5px;height:1px;background:#000000;"></div>
<div style="left:582px;top:136px;width:7px;height:1px;background:#000000;"></div>
<div style="left:584px;top:137px;width:3px;height:3px;background:#000000;"></div>
<div style="left:584px;top:381px;width:3px;height:3px;background:#000000;"></div>
<div style="left:582px;top:384px;width:7px;height:1px;background:#000000;"></div>
<div style="left:583px;top:385px;width:5px;height:1px;background:#000000;"></div>
<div style="left:584px;top:386px;width:3px;height:1px;background:#000000;"></div>
<div style="left:585px;top:387px;width:1px;height:1px;background:#000000;"></div>
<div style="left:238px;top:400px;width:1px;height:1px;background:#000000;"></div>
<div style="left:239px;top:399px;width:1px;height:3px;background:#000000;"></div>
<div style="left:240px;top:398px;width:1px;height:5px;background:#000000;"></div>
<div style="left:241px;top:397px;width:1px;height:7px;background:#000000;"></div>
<div style="left:242px;top:399px;width:3px;height:3px;background:#000000;"></div>
<div style="left:566px;top:399px;width:3px;height:3px;background:#000000;"></div>
<div style="left:572px;top:400px;width:1px;height:1px;background:#000000;"></div>
<div style="left:571px;top:399px;width:1px;height:3px;background:#000000;"></div>
<div style="left:570px;top:398px;width:1px;height:5px;background:#000000;"></div>
<div style="left:569px;top:397px;width:1px;height:7px;background:#000000;"></div>
<div style="left:232px;top:101px;width:245px;height:22px;background:#ffffff;"></div>
<div style="left:232px;top:101px;width:245px;height:1px;background:#808080;"></div>
<div style="left:232px;top:101px;width:1px;height:22px;background:#808080;"></div>
<div style="left:233px;top:102px;width:243px;height:1px;background:#000000;"></div>
<div style="left:233px;top:102px;width:1px;height:20px;background:#000000;"></div>
<div style="left:232px;top:122px;width:245px;height:1px;background:#ffffff;"></div>
<div style="left:476px;top:101px;width:1px;height:22px;background:#ffffff;"></div>
<div style="left:233px;top:121px;width:243px;height:1px;background:#c0c0c0;"></div>
<div style="left:475px;top:102px;width:1px;height:20px;background:#c0c0c0;"></div>
<div style="left:459px;top:103px;width:1px;height:18px;background:#000000;"></div>
<div style="left:460px;top:103px;width:15px;height:18px;background:#c0c0c0;"></div>
<div style="left:460px;top:120px;width:15px;height:1px;background:#808080;"></div>
<div style="left:474px;top:103px;width:1px;height:18px;background:#808080;"></div>
<div style="left:461px;top:119px;width:13px;height:1px;background:#808080;"></div>
<div style="left:473px;top:104px;width:1px;height:16px;background:#808080;"></div>
<div style="left:460px;top:103px;width:14px;height:1px;background:#ffffff;"></div>
<div style="left:460px;top:103px;width:1px;height:17px;background:#ffffff;"></div>
<div style="left:475px;top:102px;width:1px;height:20px;background:#000000;"></div>
<div style="left:233px;top:102px;width:243px;height:1px;background:#000000;"></div>
<div style="left:476px;top:101px;width:1px;height:22px;background:#ffffff;"></div>
<div style="left:466px;top:107px;width:3px;height:3px;background:#000000;"></div>
<div style="left:464px;top:110px;width:7px;height:1px;background:#000000;"></div>
<div style="left:465px;top:111px;width:5px;height:1px;background:#000000;"></div>
<div style="left:466px;top:112px;width:3px;height:1px;background:#000000;"></div>
<div style="left:467px;top:113px;width:1px;height:1px;background:#000000;"></div>
<div style="left:464px;top:115px;width:7px;height:1px;background:#000000;"></div>
<span class="t" style="left:236px;top:112px;font-size:12px;font-weight:bold;color:#000000;letter-spacing:-0.143px;-webkit-text-stroke:0.15px #000000;">DDerivation Expression</span>
<div style="left:233px;top:121px;width:243px;height:93px;background:#ffffff;"></div>
<div style="left:233px;top:121px;width:243px;height:1px;background:#000000;"></div>
<div style="left:233px;top:213px;width:243px;height:1px;background:#000000;"></div>
<div style="left:233px;top:121px;width:1px;height:93px;background:#000000;"></div>
<div style="left:475px;top:121px;width:1px;height:93px;background:#000000;"></div>
<div style="left:234px;top:122px;width:241px;height:13px;background:#00ffff;"></div>
<div style="left:232px;top:122px;width:1px;height:4px;background:#ffffff;"></div>
<span class="t" style="left:236px;top:129px;font-size:12px;font-weight:bold;color:#000000;letter-spacing:-0.143px;-webkit-text-stroke:0.15px #000000;">DDerivation Expression</span>
<span class="t" style="left:236px;top:142px;font-size:12px;font-weight:bold;color:#000000;letter-spacing:0.182px;-webkit-text-stroke:0.15px #000000;">PL/SQL Block</span>
<span class="t" style="left:236px;top:155px;font-size:12px;font-weight:bold;color:#000000;letter-spacing:-0.19px;-webkit-text-stroke:0.15px #000000;">Highlighting Condition</span>
<span class="t" style="left:236px;top:168px;font-size:12px;font-weight:bold;color:#000000;letter-spacing:0.143px;-webkit-text-stroke:0.15px #000000;">User Text Areas</span>
<span class="t" style="left:236px;top:181px;font-size:12px;font-weight:bold;color:#000000;letter-spacing:0.0px;-webkit-text-stroke:0.15px #000000;">Description</span>
<span class="t" style="left:236px;top:194px;font-size:12px;font-weight:bold;color:#000000;letter-spacing:0.0px;-webkit-text-stroke:0.15px #000000;">Notes</span>
<span class="t" style="left:236px;top:207px;font-size:12px;font-weight:bold;color:#000000;letter-spacing:0.154px;-webkit-text-stroke:0.15px #000000;">User Help Text</span>
<div style="left:160px;top:421px;width:88px;height:23px;background:#c0c0c0;"></div>
<div style="left:161px;top:421px;width:86px;height:1px;background:#000000;"></div>
<div style="left:161px;top:443px;width:86px;height:1px;background:#000000;"></div>
<div style="left:160px;top:422px;width:1px;height:21px;background:#000000;"></div>
<div style="left:247px;top:422px;width:1px;height:21px;background:#000000;"></div>
<div style="left:161px;top:422px;width:86px;height:1px;background:#ffffff;"></div>
<div style="left:161px;top:423px;width:85px;height:1px;background:#ffffff;"></div>
<div style="left:161px;top:422px;width:1px;height:21px;background:#ffffff;"></div>
<div style="left:162px;top:422px;width:1px;height:20px;background:#ffffff;"></div>
<div style="left:161px;top:442px;width:86px;height:1px;background:#808080;"></div>
<div style="left:246px;top:422px;width:1px;height:21px;background:#808080;"></div>
<div style="left:162px;top:441px;width:85px;height:1px;background:#808080;"></div>
<div style="left:245px;top:423px;width:1px;height:20px;background:#808080;"></div>
<div style="left:276px;top:421px;width:88px;height:23px;background:#c0c0c0;"></div>
<div style="left:277px;top:421px;width:86px;height:1px;background:#000000;"></div>
<div style="left:277px;top:443px;width:86px;height:1px;background:#000000;"></div>
<div style="left:276px;top:422px;width:1px;height:21px;background:#000000;"></div>
<div style="left:363px;top:422px;width:1px;height:21px;background:#000000;"></div>
<div style="left:277px;top:422px;width:86px;height:1px;background:#000000;"></div>
<div style="left:277px;top:442px;width:86px;height:1px;background:#000000;"></div>
<div style="left:277px;top:422px;width:1px;height:21px;background:#000000;"></div>
<div style="left:362px;top:422px;width:1px;height:21px;background:#000000;"></div>
<div style="left:278px;top:423px;width:84px;height:1px;background:#ffffff;"></div>
<div style="left:278px;top:424px;width:83px;height:1px;background:#ffffff;"></div>
<div style="left:278px;top:423px;width:1px;height:19px;background:#ffffff;"></div>
<div style="left:279px;top:423px;width:1px;height:18px;background:#ffffff;"></div>
<div style="left:278px;top:441px;width:84px;height:1px;background:#808080;"></div>
<div style="left:361px;top:423px;width:1px;height:19px;background:#808080;"></div>
<div style="left:279px;top:440px;width:83px;height:1px;background:#808080;"></div>
<div style="left:360px;top:424px;width:1px;height:18px;background:#808080;"></div>
<div style="left:391px;top:421px;width:88px;height:23px;background:#c0c0c0;"></div>
<div style="left:392px;top:421px;width:86px;height:1px;background:#000000;"></div>
<div style="left:392px;top:443px;width:86px;height:1px;background:#000000;"></div>
<div style="left:391px;top:422px;width:1px;height:21px;background:#000000;"></div>
<div style="left:478px;top:422px;width:1px;height:21px;background:#000000;"></div>
<div style="left:392px;top:422px;width:86px;height:1px;background:#ffffff;"></div>
<div style="left:392px;top:423px;width:85px;height:1px;background:#ffffff;"></div>
<div style="left:392px;top:422px;width:1px;height:21px;background:#ffffff;"></div>
<div style="left:393px;top:422px;width:1px;height:20px;background:#ffffff;"></div>
<div style="left:392px;top:442px;width:86px;height:1px;background:#808080;"></div>
<div style="left:477px;top:422px;width:1px;height:21px;background:#808080;"></div>
<div style="left:393px;top:441px;width:85px;height:1px;background:#808080;"></div>
<div style="left:476px;top:423px;width:1px;height:20px;background:#808080;"></div>
<span class="t" style="left:195px;top:433px;font-size:12px;font-weight:bold;color:#808080;letter-spacing:0px;-webkit-text-stroke:0.15px #808080;">OK</span>
<span class="t" style="left:301px;top:433px;font-size:12px;font-weight:bold;color:#000000;letter-spacing:0.0px;-webkit-text-stroke:0.15px #000000;">Cancel</span>
<span class="t" style="left:421px;top:433px;font-size:12px;font-weight:bold;color:#000000;letter-spacing:0.0px;-webkit-text-stroke:0.15px #000000;">Help</span>
</body></html>
